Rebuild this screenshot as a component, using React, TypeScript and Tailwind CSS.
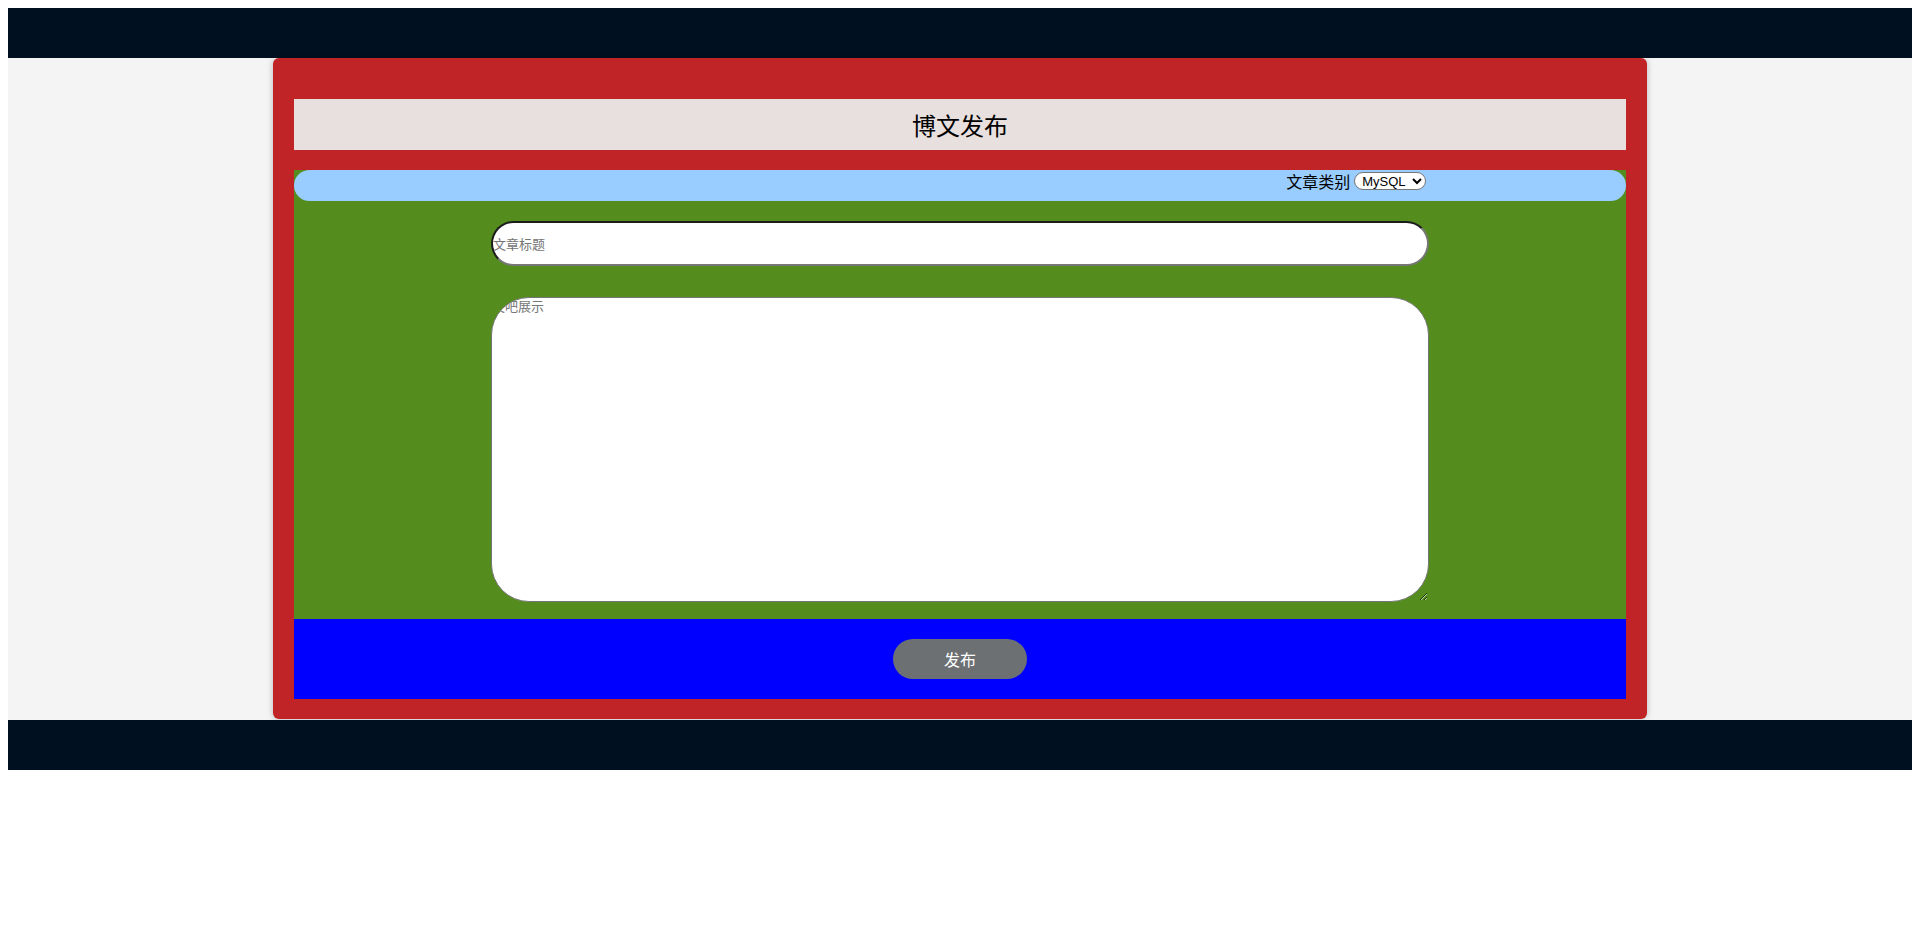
import React from "react";

const cjk = "font-['Noto_Sans_CJK_SC','Liberation_Sans',sans-serif]";

export default function App() {
  return (
    <div className={`p-2 ${cjk} text-black`}>
      {/* Top bar */}
      <div className="h-[50px] bg-[#011020]" />

      {/* Main area */}
      <div className="h-[662px] bg-[#f4f4f4]">
        <div className="mx-auto flex h-[661px] w-[1374px] flex-col rounded-md bg-[#c12426] px-[21px] pt-[41px] pb-[20px] shadow-[0_0_6px_rgba(0,0,0,0.25)]">
          {/* Title */}
          <div className="flex h-[51px] items-center justify-center bg-[#e8dfdf]">
            <h1 className="text-[24px] leading-none font-normal">博文发布</h1>
          </div>

          {/* Form body */}
          <div className="mt-5 flex h-[449px] flex-col items-center bg-[#548c1e]">
            <div className="h-[31px] w-full rounded-full bg-[#99ccff]">
              <div className="mx-auto flex h-[21px] w-[70%] items-center justify-end gap-[4px] text-[16px] leading-[20px]">
                <span>文章类别</span>
                <select
                  defaultValue="MySQL"
                  className="h-[18px] rounded-full border border-[#767676] bg-white px-[3px] font-['Liberation_Sans',sans-serif] text-[13px] leading-[14px] text-black"
                >
                  <option>MySQL</option>
                  <option>Java</option>
                  <option>Python</option>
                </select>
              </div>
            </div>

            <input
              type="text"
              placeholder="文章标题"
              className="mt-[20px] h-[45px] w-[938px] rounded-full border-2 border-t-[#1c1c1c] border-l-[#1c1c1c] border-r-[#767676] border-b-[#767676] bg-white text-[13px] placeholder:text-[#757575] outline-none"
            />

            <textarea
              placeholder="文吧展示"
              className="mt-[31px] h-[305px] w-[938px] rounded-[38px] border border-[#767676] bg-white text-[13px] leading-[16px] placeholder:text-[#757575] outline-none"
            />
          </div>

          {/* Submit */}
          <div className="flex h-[80px] items-center justify-center bg-[#0000ff]">
            <button className="h-[40px] w-[134px] rounded-full bg-[#6c7073] text-[16px] text-white">
              发布
            </button>
          </div>
        </div>
      </div>

      {/* Footer */}
      <div className="h-[50px] bg-[#011020]" />
    </div>
  );
}
